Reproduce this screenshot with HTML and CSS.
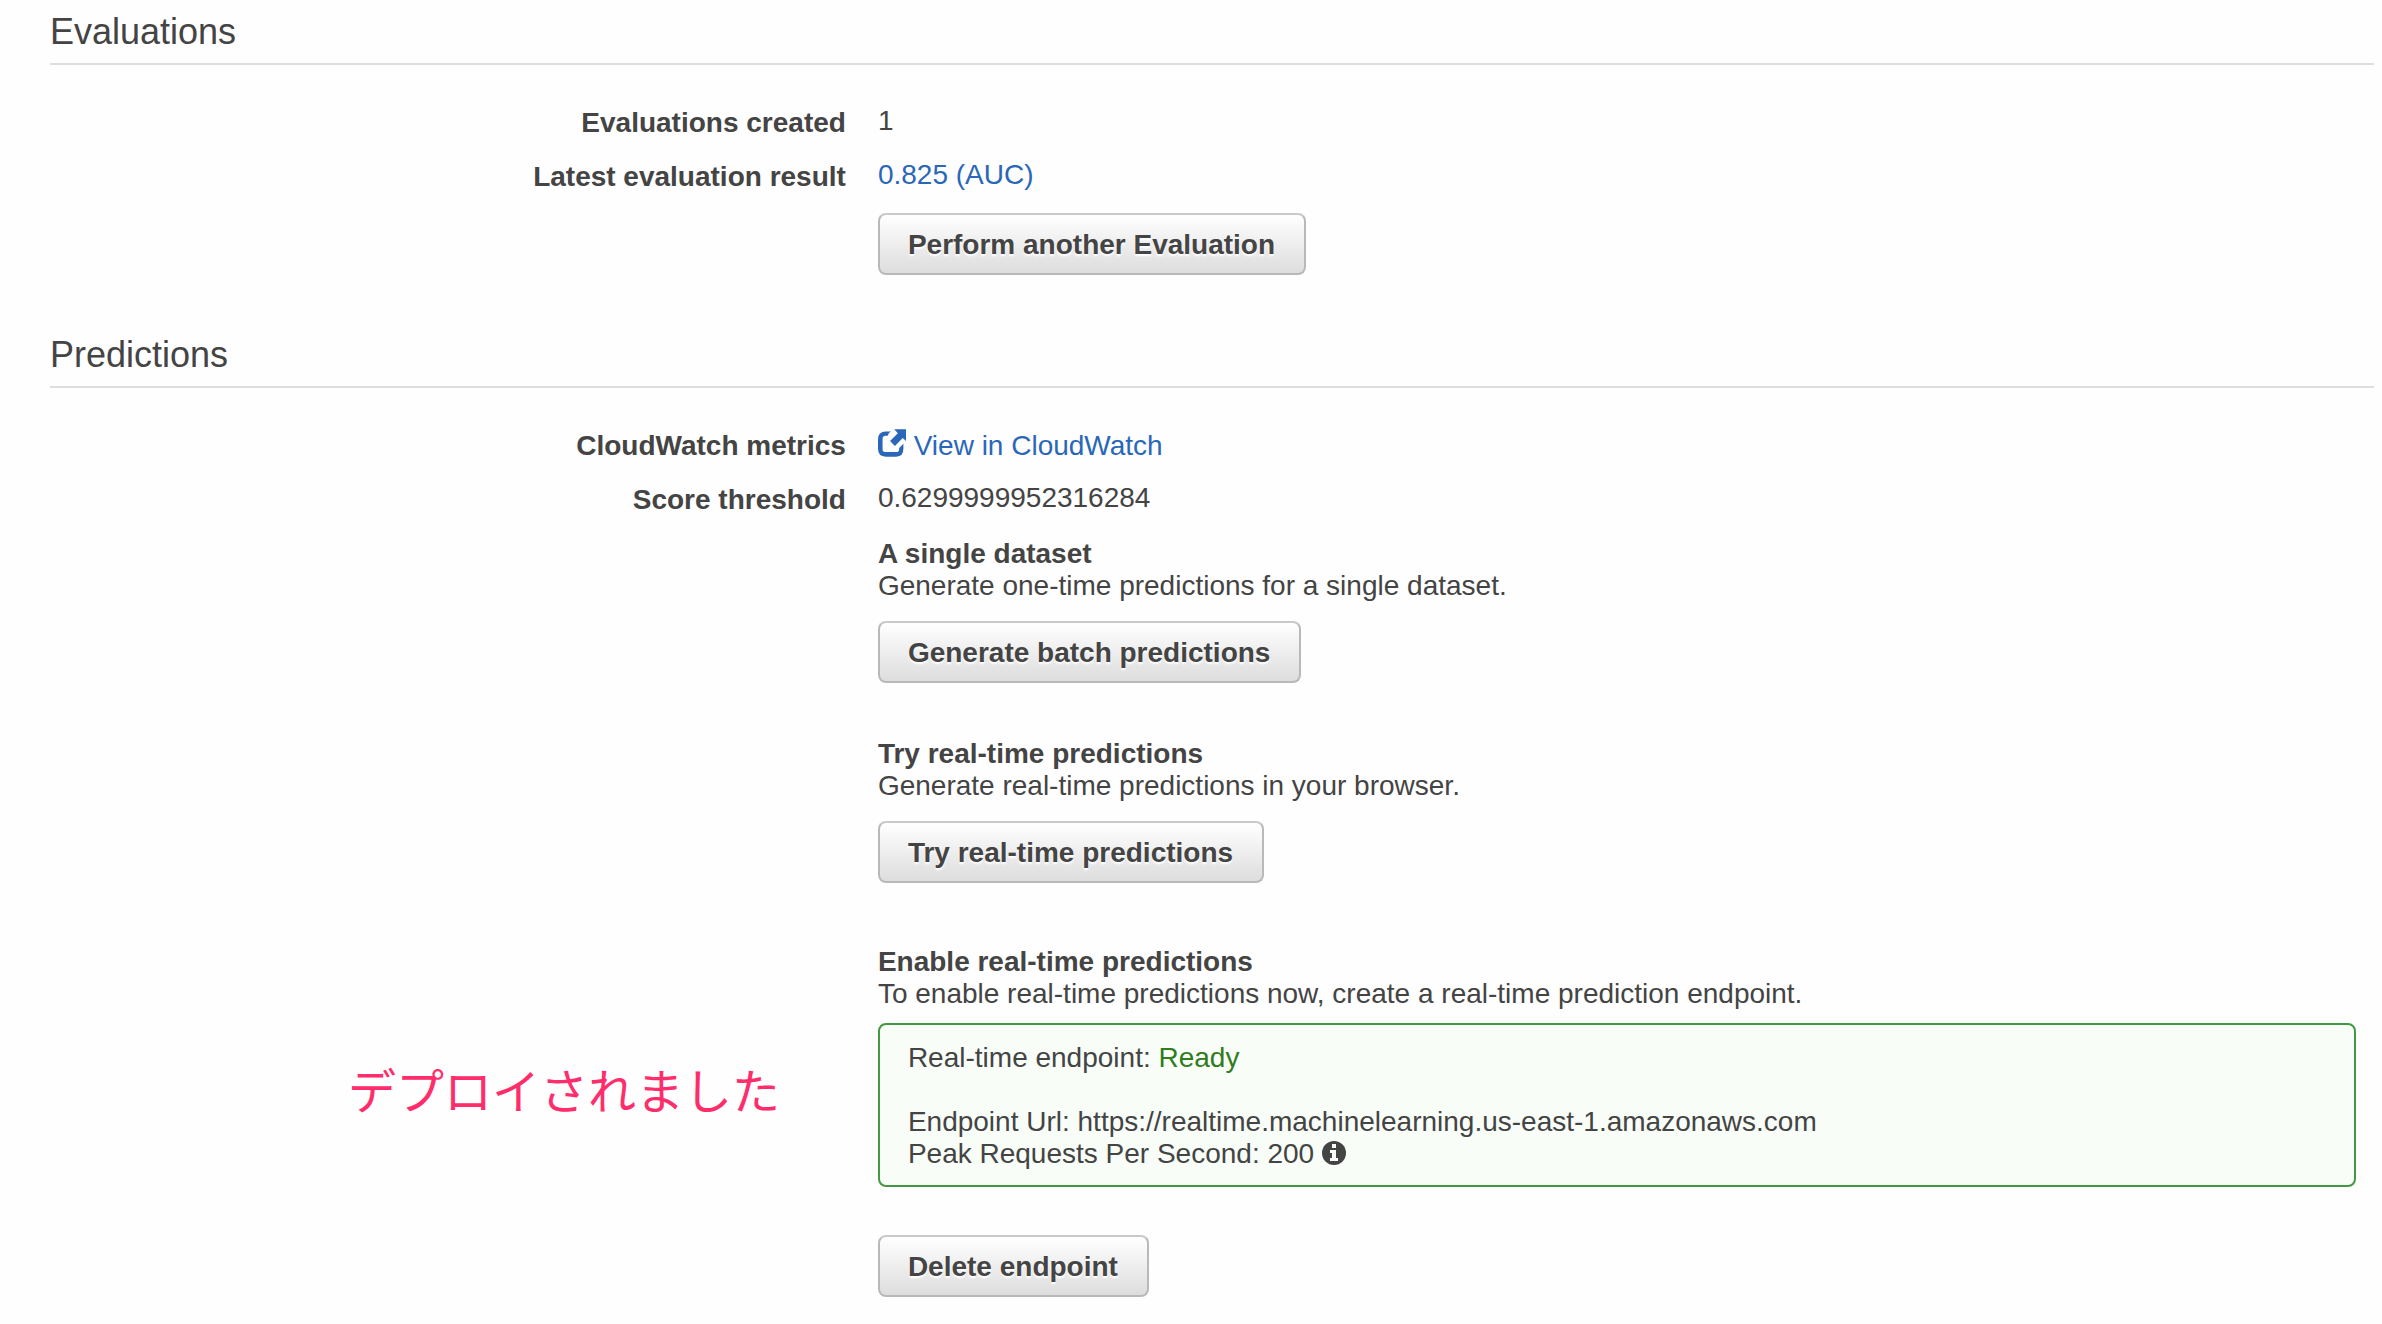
FILE: index.html
```html
<!DOCTYPE html>
<html lang="en">
<head>
<meta charset="utf-8">
<title>Model summary</title>
<link rel="stylesheet" href="styles.css">
</head>
<body>
<main class="page">
  <section class="section">
    <h2 class="section-title">Evaluations</h2>
    <dl class="details">
      <dt class="label">Evaluations created</dt>
      <dd class="value">1</dd>
      <dt class="label">Latest evaluation result</dt>
      <dd class="value"><a class="link" href="#evaluation">0.825 (AUC)</a></dd>
      <dd class="value"><button class="button" type="button">Perform another Evaluation</button></dd>
    </dl>
  </section>

  <section class="section">
    <h2 class="section-title">Predictions</h2>
    <dl class="details">
      <dt class="label">CloudWatch metrics</dt>
      <dd class="value value-link"><a class="link" href="#cloudwatch"><svg class="icon-external" viewBox="0 0 86 84" aria-hidden="true"><path d="M40 7Q32 10 30 20H24Q14 20 14 30V61Q14 70 24 70H55Q65 70 65 61V57L78 44V60Q78 84 56 84H24Q0 84 0 60V31Q0 7 24 7Z" fill="currentColor"/><path d="M50 0H86V36L76 27L52 51L37 36L61 12Z" fill="currentColor"/></svg> View in CloudWatch</a></dd>
      <dt class="label">Score threshold</dt>
      <dd class="value">0.6299999952316284</dd>
    </dl>

    <div class="actions">
      <div class="action">
        <h3 class="action-title">A single dataset</h3>
        <p class="action-text">Generate one-time predictions for a single dataset.</p>
        <button class="button action-button" type="button">Generate batch predictions</button>
      </div>
      <div class="action">
        <h3 class="action-title">Try real-time predictions</h3>
        <p class="action-text">Generate real-time predictions in your browser.</p>
        <button class="button action-button" type="button">Try real-time predictions</button>
      </div>
      <div class="action action-enable">
        <h3 class="action-title">Enable real-time predictions</h3>
        <p class="action-text">To enable real-time predictions now, create a real-time prediction endpoint.</p>
      </div>
      <p class="note" lang="ja">デプロイされました</p>
      <div class="endpoint">
        <p class="endpoint-status">Real-time endpoint: <span class="ready">Ready</span></p>
        <p>Endpoint Url: https://realtime.machinelearning.us-east-1.amazonaws.com</p>
        <p>Peak Requests Per Second: 200 <svg class="icon-info" viewBox="0 0 24 24" aria-hidden="true"><circle cx="12" cy="12" r="12" fill="currentColor"/><path d="M10 3h4v4h-4zM8 9h6v8h2v3H8v-3h2v-5H8z" class="icon-mark"/></svg></p>
      </div>
      <div class="action delete">
        <button class="button" type="button">Delete endpoint</button>
      </div>
    </div>
  </section>
</main>
</body>
</html>
```
FILE: styles.css
```css
* {
  box-sizing: border-box;
}

body {
  margin: 0;
  background: #fefefe;
  color: #444;
  font: 28px/32px "Liberation Sans", Arial, "Noto Sans CJK JP", sans-serif;
}

h2, h3, p, dl, dd {
  margin: 0;
}

.page {
  padding: 11px 8px 28px 50px;
}

.section + .section {
  margin-top: 59px;
}

.section-title {
  padding-bottom: 10px;
  border-bottom: 2px solid #dedede;
  font-size: 36px;
  font-weight: 400;
  line-height: 42px;
}

.details,
.actions {
  display: grid;
  grid-template-columns: 35fr 65fr;
  column-gap: 32px;
  padding-right: 18px;
}

.details {
  row-gap: 18px;
  padding-top: 40px;
}

.label {
  grid-column: 1;
  font-weight: 700;
  line-height: 36px;
  text-align: right;
}

.value {
  grid-column: 2;
}

.value-link {
  line-height: 36px;
}

.link {
  color: #2a67b8;
  text-decoration: none;
}

.button {
  display: block;
  padding: 14px 29px 12px 28px;
  border: 2px solid #b9b9b9;
  border-top-color: #c9c9c9;
  border-radius: 8px;
  background: linear-gradient(#fff, #ddd);
  color: #444;
  font: inherit;
  font-weight: 700;
  text-shadow: 0 2px 2px #fff;
  cursor: pointer;
}

.actions {
  padding-top: 20px;
}

.action {
  grid-column: 2;
}

.action + .action {
  margin-top: 55px;
}

.action + .action-enable {
  margin-top: 63px;
}

.action-title {
  font-size: 28px;
}

.action-button {
  margin-top: 19px;
}

.note {
  grid-column: 1;
  justify-self: end;
  padding: 48px 66px 0 0;
  color: #ff2d6b;
  font-family: "Noto Sans CJK JP", sans-serif;
  font-size: 48px;
  line-height: 60px;
}

.endpoint {
  grid-column: 2;
  margin-top: 13px;
  padding: 17px 28px 15px;
  border: 2px solid #439843;
  border-radius: 8px;
  background: #f8fdf8;
}

.endpoint-status {
  margin-bottom: 32px;
}

.ready {
  color: #317c1d;
}

.delete {
  margin-top: 48px;
}

.icon-external {
  width: 28px;
  height: 28px;
  vertical-align: -2px;
}

.icon-info {
  width: 24px;
  height: 24px;
  vertical-align: -2px;
}

.icon-mark {
  fill: #f8fdf8;
}
```
